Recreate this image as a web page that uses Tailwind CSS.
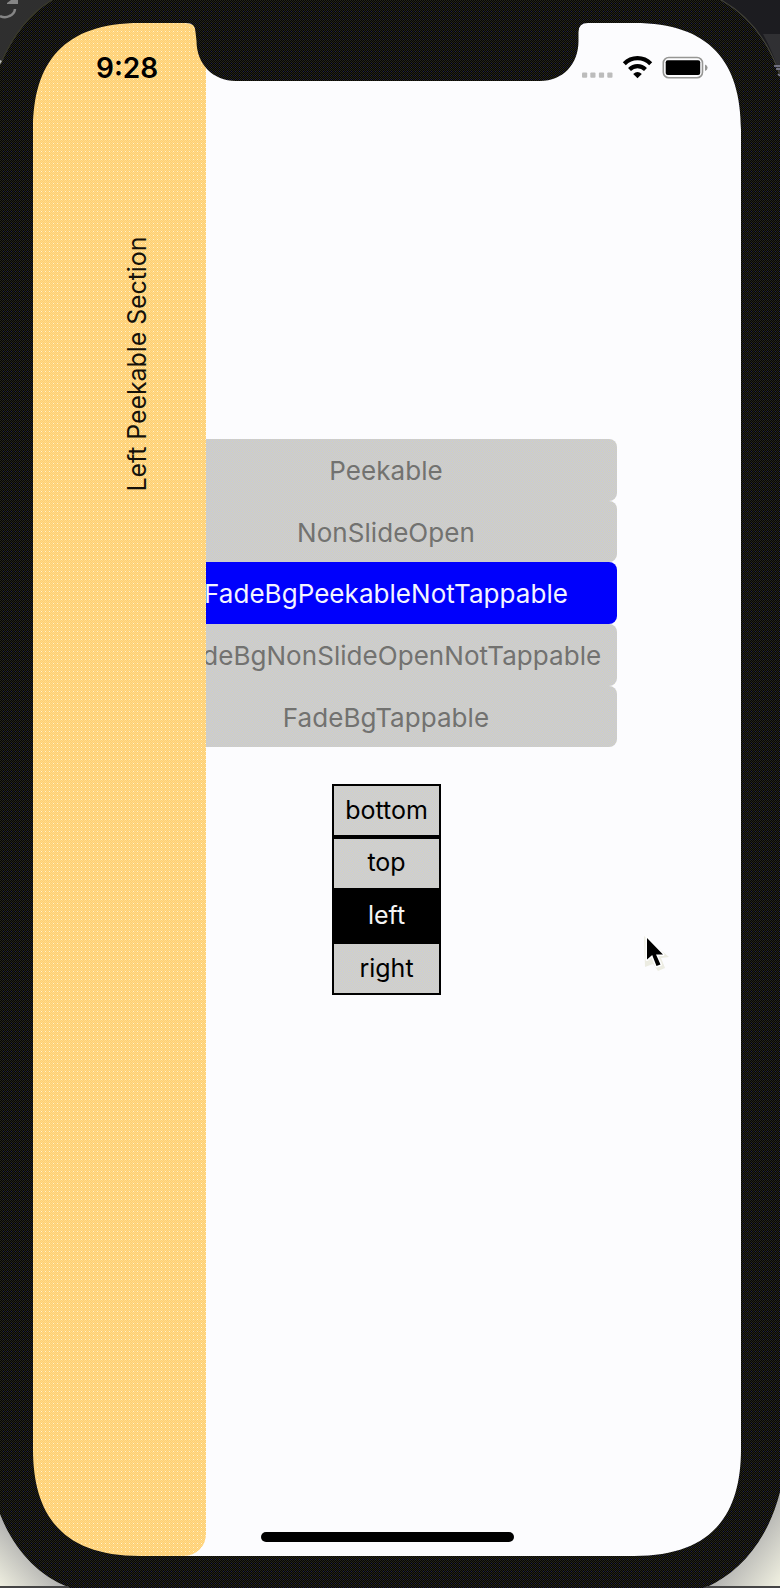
<!DOCTYPE html>
<html lang="en">
<head>
<meta charset="utf-8">
<title>Peekable drawer</title>
<script src="https://cdn.jsdelivr.net/npm/@tailwindcss/browser@4"></script>
</head>
<body class="w-[780px] h-[1588px] overflow-hidden bg-[#141411] font-['Inter','Liberation_Sans',sans-serif]">
<div class="relative w-[780px] h-[1588px] overflow-hidden pl-[33px] pt-[23px]">

  <!-- Screen -->
  <main class="relative w-[708px] h-[1533px] bg-[#fcfcfe] flex flex-col items-center">
    <div class="mt-[416px] w-[460px] flex flex-col text-[26px] tracking-[0.05px] text-[#727270]">
      <div class="h-[61.7px] rounded-lg bg-[#cecec9] bg-[repeating-conic-gradient(#c6c6de_0_25%,#d4d4b8_0_50%)] bg-[length:2px_2px] flex items-center justify-center whitespace-nowrap"><span class="relative -left-px top-px">Peekable</span></div>
      <div class="h-[61.7px] rounded-lg bg-[#cecec9] bg-[repeating-conic-gradient(#c6c6de_0_25%,#d4d4b8_0_50%)] bg-[length:2px_2px] flex items-center justify-center whitespace-nowrap"><span class="relative -left-px top-px">NonSlideOpen</span></div>
      <div class="h-[61.7px] rounded-lg bg-[#0000fc] text-[#f4f4ff] flex items-center justify-center whitespace-nowrap"><span class="relative -left-px">FadeBgPeekableNotTappable</span></div>
      <div class="h-[61.7px] rounded-lg bg-[#cecec9] bg-[repeating-conic-gradient(#c6c6de_0_25%,#d4d4b8_0_50%)] bg-[length:2px_2px] flex items-center justify-center whitespace-nowrap"><span class="relative top-px">FadeBgNonSlideOpenNotTappable</span></div>
      <div class="h-[61.7px] rounded-lg bg-[#cecec9] bg-[repeating-conic-gradient(#c6c6de_0_25%,#d4d4b8_0_50%)] bg-[length:2px_2px] flex items-center justify-center whitespace-nowrap"><span class="relative -left-px top-px">FadeBgTappable</span></div>
    </div>
    <div class="mt-[36.5px] mr-px w-[109px] flex flex-col text-[25px] text-black">
      <div class="h-[52.8px] border-2 border-black bg-[#d0d0cb] bg-[repeating-conic-gradient(#c8c8de_0_25%,#d6d6bc_0_50%)] bg-[length:2px_2px] flex items-center justify-center"><span>bottom</span></div>
      <div class="h-[52.8px] border-2 border-black bg-[#d0d0cb] bg-[repeating-conic-gradient(#c8c8de_0_25%,#d6d6bc_0_50%)] bg-[length:2px_2px] flex items-center justify-center"><span>top</span></div>
      <div class="h-[52.8px] border-2 border-black bg-black text-[#f4f4f4] flex items-center justify-center"><span>left</span></div>
      <div class="h-[52.8px] border-2 border-black bg-[#d0d0cb] bg-[repeating-conic-gradient(#c8c8de_0_25%,#d6d6bc_0_50%)] bg-[length:2px_2px] flex items-center justify-center"><span>right</span></div>
    </div>
    <div class="mt-auto mb-[14.5px] w-[253px] h-[9.500px] rounded-full bg-black"></div>

    <!-- Drawer -->
    <aside class="absolute left-0 top-0 w-[172.5px] h-[1533px] rounded-r-[22px] bg-[#ffd680] bg-[radial-gradient(circle_at_0.5px_0.5px,#fff3d0_0.6px,transparent_0.9px),repeating-conic-gradient(#ffd070_0_25%,#ffd98c_0_50%)] bg-[length:4px_4px,2px_2px] flex justify-center pt-[214px] pl-[35px]">
      <span class="h-[255.500px] rotate-180 [writing-mode:vertical-rl] whitespace-nowrap text-[25px] tracking-[-0.1px] leading-[30px] text-[#14110a] text-right">Left Peekable Section</span>
    </aside>

    <!-- Status bar -->
    <header class="absolute left-0 top-0 w-full h-[90px] pl-[63px] pr-[32px] flex items-center justify-between">
      <span class="text-[28px] font-semibold leading-none text-black">9:28</span>
      <svg class="w-[128px] h-[28px]" viewBox="581 54 128 28">
        <g fill="#bcbcbc"><rect x="582" y="72.5" width="5.2" height="5.2" rx="1"/><rect x="590.3" y="72.5" width="5.2" height="5.2" rx="1"/><rect x="598.9" y="72.5" width="5.2" height="5.2" rx="1"/><rect x="607.3" y="72.5" width="5.2" height="5.2" rx="1"/></g>
        <g fill="none" stroke="#000" stroke-width="4.2"><path d="M624.3 63.7A18.5 18.5 0 0 1 650.7 63.7"/><path d="M629.5 69.4A11.6 11.6 0 0 1 645.5 69.4"/></g>
        <path d="M637.5 78.3 633.2 74Q637.5 70 641.8 74Z"/>
        <rect x="663.3" y="57.5" width="39.2" height="20.3" rx="5.5" fill="none" stroke="#969694" stroke-width="1.6"/>
        <rect x="665.7" y="60.3" width="34.5" height="14.8" rx="2"/>
        <path d="M705 64.5Q707.6 65.3 707.6 67.7 707.6 70 705 70.9Z" fill="#969694"/>
      </svg>
    </header>
  </main>

  <!-- Device frame, notch, desktop corners and pointer -->
  <svg class="absolute left-0 top-0 w-[780px] h-[1588px]" viewBox="0 0 780 1588">
    <defs>
      <pattern id="frame" width="4" height="4" patternUnits="userSpaceOnUse">
        <rect width="4" height="4" fill="#060606"/>
        <path fill="#242418" d="M0 0h1v1H0ZM2 0h1v1H2ZM1 1h1v1H1ZM3 1h1v1H3ZM0 2h1v1H0ZM2 2h1v1H2ZM1 3h1v1H1Z"/>
        <path fill="#20204a" d="M3 3h1v1H3Z"/>
      </pattern>
      <linearGradient id="bl" x1="1" y1="0" x2="0" y2="1"><stop offset=".45" stop-color="#aaa"/><stop offset="1" stop-color="#efefe0"/></linearGradient>
      <linearGradient id="br" x1="0" y1="0" x2="1" y2="1"><stop offset=".45" stop-color="#aaa"/><stop offset="1" stop-color="#f2f2e2"/></linearGradient>
    </defs>
    <path fill="url(#frame)" fill-rule="evenodd" d="M0 0H780V1588H0ZM33 130V1449C33 1517 64 1556 140 1556H634C710 1556 741 1517 741 1449V130C741 62 710 23 634 23H588Q578.500 23 578.500 32V41C578.500 64 563 81 540 81H236C213 81 196.500 64 196.500 41L195.500 32Q195.500 23 186 23H140C64 23 33 62 33 130Z"/>
    <path fill="#2f2f2f" d="M0 0H52C32 12 14 32 0 65Z"/>
    <path fill="none" stroke="#3b3b2c" stroke-width="1.200" d="M52 0C32 12 14 32 0 65"/>
    <path fill="none" stroke="#858585" stroke-width="2.500" d="M0 16Q5 18.500 9.500 16 14.500 14 15 9"/>
    <path fill="#858585" d="M7 3 11 0H18V4H7Z"/>
    <path fill="#1c1c20" d="M721 0C748 15 768 40 780 75V0Z"/>
    <path fill="#303033" d="M763 34H780V75Q774 54 763 34Z"/>
    <path fill="none" stroke="#43433a" stroke-width="1.200" d="M721 0C748 15 768 40 780 75"/>
    <path fill="none" stroke="#85859a" stroke-width="1.500" d="M774 66H780M776 69H780M778 74 780 76"/>
    <path fill="#b9b9b5" d="M0 60 2 61 0 64Z"/>
    <path fill="url(#bl)" d="M0 1514C14 1550 38 1575 68 1587H0Z"/>
    <path fill="url(#br)" d="M780 1492C768 1540 740 1572 707 1587H780Z"/>
    <path fill="#454545" d="M0 1586H68L70 1588H0ZM707 1586H780V1588H703Z"/>
    <path fill="#ecece2" d="M644 936 645 967 653 964 658 971 665 968 661 958 669 957Z"/>
    <path fill="#000" stroke="#fff" stroke-width="3" paint-order="stroke" stroke-linejoin="round" d="M647 938V959.500L652.200 955 656.500 966 660.500 964.500 656 954.500H663Z"/>
  </svg>
</div>
</body>
</html>
